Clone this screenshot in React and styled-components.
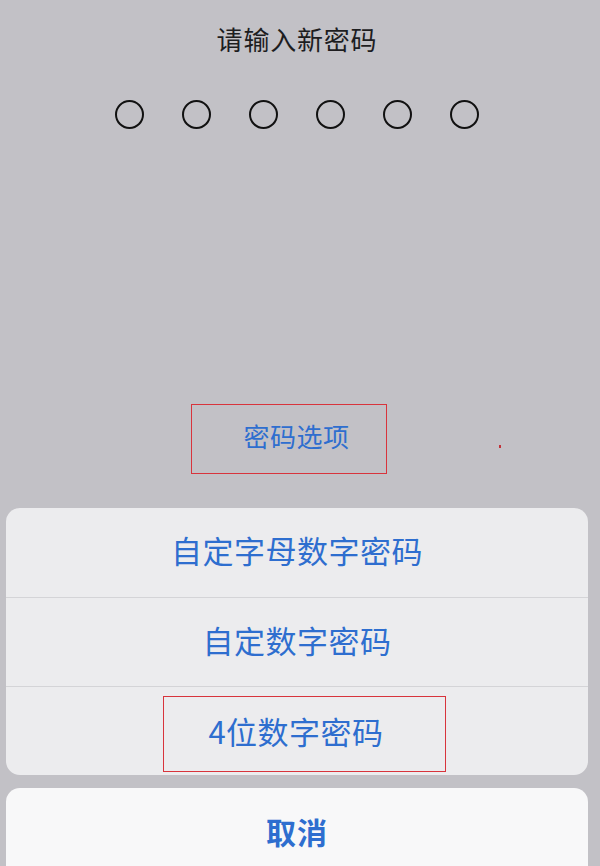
import React from "react";
import styled, { createGlobalStyle } from "styled-components";

const GlobalStyle = createGlobalStyle`
  html, body {
    margin: 0;
    padding: 0;
    background: #c2c1c6;
  }
  * {
    box-sizing: border-box;
  }
`;

const options = [
  { label: "自定字母数字密码" },
  { label: "自定数字密码" },
  { label: "4位数字密码", marked: true },
];

const App = () => {
  return (
    <>
      <GlobalStyle />
      <Screen>
        <Top>
          <Title>请输入新密码</Title>
          <Dots>
            {[0, 1, 2, 3, 4, 5].map((i) => (
              <Dot key={i} />
            ))}
          </Dots>
        </Top>

        <OptionsRow>
          <OptionsLink>密码选项</OptionsLink>
          <StrayMark />
        </OptionsRow>

        <Sheet>
          {options.map((opt) => (
            <SheetRow key={opt.label} $marked={opt.marked}>
              <RowLabel $marked={opt.marked}>{opt.label}</RowLabel>
            </SheetRow>
          ))}
        </Sheet>

        <CancelSheet>
          <CancelLabel>取消</CancelLabel>
        </CancelSheet>
      </Screen>
    </>
  );
};

const Screen = styled.div`
  width: 600px;
  height: 866px;
  overflow: hidden;
  background: #c2c1c6;
  display: flex;
  flex-direction: column;
  align-items: stretch;
  font-family: "Noto Sans CJK SC", "Noto Sans", sans-serif;

  & > * {
    flex-shrink: 0;
  }
`;

const Top = styled.div`
  display: flex;
  flex-direction: column;
  align-items: center;
  padding: 23px 6px 0 0;
`;

const Title = styled.div`
  font-size: 26px;
  line-height: 32px;
  color: #1d1d1f;
  letter-spacing: 0.8px;
`;

const Dots = styled.div`
  display: flex;
  gap: 38px;
  margin-top: 45px;
`;

const Dot = styled.span`
  width: 29px;
  height: 29px;
  border-radius: 50%;
  border: 2px solid #111;
`;

const OptionsRow = styled.div`
  position: relative;
  display: flex;
  justify-content: center;
  margin-top: 275px;
  padding-right: 22px;
`;

const OptionsLink = styled.span`
  display: inline-block;
  padding: 13px 36px 19px 51px;
  border: 1.5px solid #d8343c;
  font-size: 26px;
  line-height: 36px;
  color: #2e6ecf;
  letter-spacing: 0.5px;
`;

const StrayMark = styled.span`
  position: absolute;
  left: 499px;
  top: 41px;
  width: 2px;
  height: 3px;
  background: #c2323a;
`;

const Sheet = styled.div`
  margin: 34px 12px 0 6px;
  background: #ececee;
  border-radius: 14px;
  overflow: hidden;
  display: flex;
  flex-direction: column;
`;

const SheetRow = styled.div`
  height: 89px;
  display: flex;
  align-items: center;
  justify-content: center;
  border-top: 1px solid #d4d4d7;
  padding-bottom: ${(props) => (props.$marked ? "0" : "5px")};

  &:first-child {
    border-top: none;
  }
`;

const RowLabel = styled.span`
  display: inline-block;
  font-size: 31px;
  line-height: 36px;
  color: #2e6ecf;
  letter-spacing: 0.5px;
  padding: ${(props) => (props.$marked ? "16px 61px 22px 44px" : "0")};
  border: ${(props) => (props.$marked ? "1.5px solid #d8343c" : "none")};
  margin: ${(props) => (props.$marked ? "5px 0 0 15px" : "0")};
`;

const CancelSheet = styled.div`
  margin: 13px 12px 0 6px;
  height: 92px;
  background: #f8f8f9;
  border-radius: 14px;
  display: flex;
  justify-content: center;
  padding-top: 24px;
`;

const CancelLabel = styled.span`
  font-size: 30px;
  line-height: 38px;
  font-weight: 700;
  color: #2e6ecf;
  letter-spacing: 1px;
`;

export default App;
